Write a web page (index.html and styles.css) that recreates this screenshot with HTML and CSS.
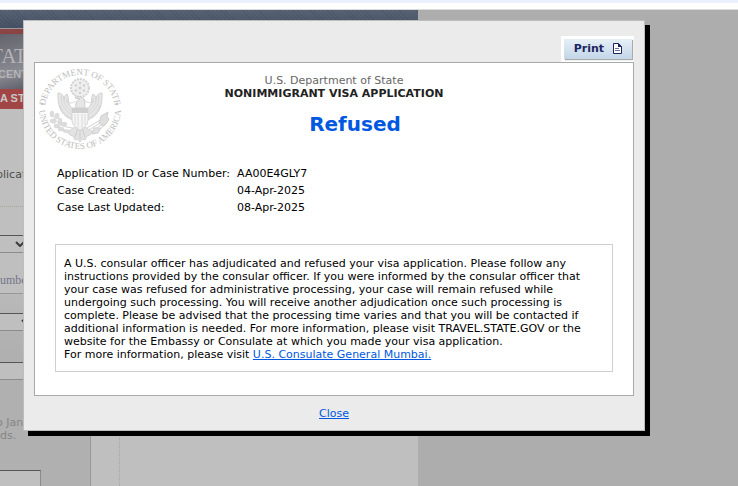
FILE: index.html
```
<!DOCTYPE html>
<html lang="en">
<head>
    <meta charset="UTF-8">
    <meta name="viewport" content="width=device-width, initial-scale=1.0">
    <title>Visa Status Check</title>
    <link rel="stylesheet" href="styles.css">
</head>
<body>
    <div class="top-strip"></div>

    <div class="page">
        <div class="stripe"></div>
        <div class="banner">
            <div class="banner-title">TAT</div>
            <div class="banner-sub">CENT</div>
        </div>
        <div class="nav">A ST</div>
        <div class="intro">plicat</div>
        <div class="columns">
            <form class="sidebar">
                <div class="select-row">
                    <select class="field type-select" aria-label="Visa type"><option></option></select>
                    <svg class="arrow" width="10" height="6" viewBox="0 0 10 6"><path d="M1 1l4 4 4-4" fill="none" stroke="#3c3c3c" stroke-width="2"/></svg>
                </div>
                <div class="field-label">umbe</div>
                <div class="panel">
                    <div class="select-row">
                        <select class="field place-select" aria-label="Location"><option></option></select>
                        <svg class="arrow arrow-far" width="10" height="6" viewBox="0 0 10 6"><path d="M1 1l4 4 4-4" fill="none" stroke="#3c3c3c" stroke-width="2"/></svg>
                    </div>
                    <input class="field case-input" type="text" aria-label="Case number">
                    <p class="hint">o Jan<br>ds.</p>
                    <input class="field code-input" type="text" aria-label="Code">
                </div>
            </form>
            <div class="content"></div>
        </div>
    </div>

    <div class="dialog" role="dialog" aria-labelledby="status">
        <div class="toolbar">
            <div class="print-box">
                <button class="print-btn" type="button">Print
                    <svg width="9" height="11" viewBox="0 0 9 11"><path d="M.5.5h5l3 3v7h-8z" fill="#fff" stroke="#1c2560"/><path d="M5 0v4h4z" fill="#1c2560"/><path d="M2 5.500h4M2 7.500h5" stroke="#6b7296"/></svg>
                </button>
            </div>
        </div>

        <div class="report">
            <div class="report-head">
                <svg class="seal" width="84" height="86" viewBox="-1 -1 84 86">
                    <defs>
                        <path id="arc-top" d="M6 42a35 35 0 0 1 70 0"/>
                        <path id="arc-bottom" d="M0 40a41 41 0 0 0 82 0"/>
                    </defs>
                    <g class="seal-text">
                        <text><textPath href="#arc-top" startOffset="50%">DEPARTMENT OF STATE</textPath></text>
                        <text><textPath href="#arc-bottom" startOffset="50%">UNITED STATES OF AMERICA</textPath></text>
                    </g>
                    <g fill="#c4c4c4"><circle cx="3" cy="36" r="1.200"/><circle cx="78" cy="36" r="1.200"/></g>
                    <!-- crest -->
                    <circle cx="41" cy="20" r="9" fill="#efefef" stroke="#d2d2d2" stroke-width="2" stroke-dasharray="2 1"/>
                    <g fill="#cfcfcf">
                        <circle cx="41" cy="20" r="1.500"/><circle cx="41" cy="15" r="1.200"/><circle cx="41" cy="25" r="1.200"/>
                        <circle cx="37" cy="17.500" r="1.200"/><circle cx="45" cy="17.500" r="1.200"/>
                        <circle cx="37" cy="22.500" r="1.200"/><circle cx="45" cy="22.500" r="1.200"/>
                    </g>
                    <!-- wings -->
                    <g id="wing">
                        <path d="M34 52C24 49 18 40 19 25c4 0 6 3 6 7 0-3 1-5 3-6 2 4 1 7 2 10 1 4 4 5 6 5z" fill="#e6e6e6" stroke="#d2d2d2"/>
                        <path d="M22 28c0 8 3 14 11 19M25 32c1 6 4 9 9 12M21 37c2 7 6 11 12 13M28 30c0 5 3 9 7 11" fill="none" stroke="#d4d4d4" stroke-width=".8"/>
                    </g>
                    <use href="#wing" transform="matrix(-1 0 0 1 82 0)"/>
                    <!-- head, shield, tail -->
                    <path d="M37 40c-1-4 0-8 4-9l-5-1c2-2 7-2 9 1 2 3 0 6 1 9z" fill="#e6e6e6" stroke="#cccccc"/>
                    <path d="M27 33c5 3 7 2 9 0M46 33c3 2 6 2 9 0" fill="none" stroke="#d6d6d6"/>
                    <path d="M36 59l-8 5 3 3 3 1 2 4 3-1 2 3 2-3 3 1 2-4 3-1 3-3-8-5z" fill="#e2e2e2" stroke="#d6d6d6"/>
                    <path d="M39 60l-3 9M41 60v11M43 60l3 9" stroke="#cecece"/>
                    <path d="M33 40h16v12c0 5-4 8-8 10-4-2-8-5-8-10z" fill="#f5f5f5" stroke="#d6d6d6"/>
                    <path d="M33 40h16v5H33z" fill="#cfcfcf"/>
                    <path d="M36 46v11M39 46v14M43 46v14M46 46v11" stroke="#dadada"/>
                    <!-- olive branch -->
                    <path d="M14 46c2 8 7 13 20 14M15 55c3 4 8 7 13 8" fill="none" stroke="#d4d4d4"/>
                    <g fill="#dcdcdc" stroke="#cecece" stroke-width=".4">
                        <ellipse cx="13" cy="46" rx="2" ry="3"/><ellipse cx="18" cy="48" rx="2" ry="3"/>
                        <ellipse cx="14" cy="53" rx="3" ry="2"/><ellipse cx="21" cy="53" rx="2" ry="3"/>
                        <ellipse cx="18" cy="58" rx="3" ry="2"/><ellipse cx="25" cy="56" rx="3" ry="2"/>
                        <ellipse cx="22" cy="61" rx="3" ry="2"/><ellipse cx="27" cy="63" rx="3" ry="1.500"/>
                    </g>
                    <!-- arrows -->
                    <path d="M48 60l20-12M50 62l19-12M52 64l16-11M55 66l12-10" stroke="#d2d2d2"/>
                    <path d="M62 48l7-4-1 5 2 2-3 5-3 2-4-3z" fill="#dfdfdf" stroke="#d0d0d0"/>
                    <path d="M55 60l-2 6 6-1 3-5z" fill="#e2e2e2" stroke="#d2d2d2"/>
                </svg>
                <div class="titles">
                    <div class="dept">U.S. Department of State</div>
                    <div class="app-type">NONIMMIGRANT VISA APPLICATION</div>
                    <h1 class="status" id="status">Refused</h1>
                </div>
            </div>

            <table class="case-info">
                <tr><th scope="row">Application ID or Case Number:</th><td>AA00E4GLY7</td></tr>
                <tr><th scope="row">Case Created:</th><td>04-Apr-2025</td></tr>
                <tr><th scope="row">Case Last Updated:</th><td>08-Apr-2025</td></tr>
            </table>

            <div class="message">
                A U.S. consular officer has adjudicated and refused your visa application. Please follow any instructions provided by the consular officer. If you were informed by the consular officer that your case was refused for administrative processing, your case will remain refused while undergoing such processing. You will receive another adjudication once such processing is complete. Please be advised that the processing time varies and that you will be contacted if additional information is needed. For more information, please visit TRAVEL.STATE.GOV or the website for the Embassy or Consulate at which you made your visa application.<br>
                For more information, please visit <a href="#">U.S. Consulate General Mumbai.</a>
            </div>
        </div>

        <div class="close-row"><a href="#">Close</a></div>
    </div>
</body>
</html>
```
FILE: styles.css
```
* {
    box-sizing: border-box;
}
body {
    margin: 0;
    min-height: 100vh;
    display: flex;
    flex-direction: column;
    position: relative;
    background: #adadad;
    font-family: Verdana, "DejaVu Sans", sans-serif;
    font-size: 11px;
    line-height: 13px;
    color: #000;
}
a {
    color: #0058e0;
}

/* page behind the dialog */
.top-strip {
    height: 10px;
    border-top: 3px solid #eaf1fd;
    border-bottom: 1px solid #dcdcdc;
    background: #fff;
}
.page {
    flex: 1;
    display: flex;
    flex-direction: column;
    width: 100%;
    max-width: 418px;
    overflow: hidden;
    background: #bfbfbf;
}
.stripe {
    height: 19px;
    border-bottom: 1px solid #9a9a9a;
    background: repeating-linear-gradient(45deg, rgba(0, 0, 0, 0.08) 0 1px, transparent 1px 3px), linear-gradient(#586476, #465265);
}
.banner {
    height: 60px;
    padding-top: 11px;
    border-top: 5px solid #8a4444;
    background: linear-gradient(165deg, #62636c 0, #8b8b93 25%, #3f4151 45%, #2b3044);
    color: #b4b4b8;
    text-indent: -10px;
}
.banner-title {
    font-family: "Liberation Serif", serif;
    font-size: 21px;
    line-height: 22px;
}
.banner-sub {
    font-family: "Liberation Sans", sans-serif;
    font-weight: bold;
    font-size: 11px;
    line-height: 14px;
    text-indent: -2px;
}
.nav {
    padding: 1px 0 2px;
    background: #a24545;
    color: #c8c8c8;
    font-family: "Liberation Sans", sans-serif;
    font-weight: bold;
    font-size: 11px;
    line-height: 17px;
}
.intro {
    height: 97px;
    padding-top: 59px;
    color: #4c4c4c;
    text-indent: -4px;
}
.columns {
    flex: 1;
    display: flex;
}
.sidebar {
    width: 91px;
    display: flex;
    flex-direction: column;
    padding-top: 28px;
    border-top: 1px dotted #a8a59c;
    border-right: 1px solid #989898;
}
.content {
    flex: 1;
    margin-left: 28px;
    border-left: 1px dotted #a6a6a6;
}
.field {
    display: block;
    height: 18px;
    margin: 0;
    padding: 0;
    border: 1px solid #8c8c8c;
    border-top-color: #555;
    border-left: 0;
    border-radius: 0;
    background: #bfbfbf;
    appearance: none;
}
.select-row {
    position: relative;
}
.arrow {
    position: absolute;
    left: 15px;
    top: 6px;
}
.arrow-far {
    left: 21px;
}
.type-select {
    width: 30px;
}
.place-select {
    width: 36px;
}
.field-label {
    height: 40px;
    padding-top: 21px;
    font-family: "Liberation Serif", serif;
    font-size: 12px;
    color: #74748c;
}
.panel {
    flex: 1;
    padding-top: 19px;
    border-top: 1px solid #989898;
    background: linear-gradient(#b9b9b9, #b0b0b0 30%);
}
.case-input {
    width: 72px;
    margin-top: 31px;
}
.hint {
    margin: 36px 0 28px;
    color: #858585;
    text-indent: -4px;
}

.code-input {
    width: 41px;
}

/* dialog */
.dialog {
    position: absolute;
    top: 20px;
    left: 23px;
    width: calc(100% - 46px);
    max-width: 622px;
    padding: 15px 10px 0;
    border: 1px solid #bdbdbd;
    background: #ebebeb;
    box-shadow: 5px 5px 0 #000;
}
.toolbar {
    display: flex;
    justify-content: flex-end;
}
.print-box {
    padding: 3px 2px 3px 3px;
    background: #fff;
}
.print-btn {
    display: flex;
    align-items: center;
    gap: 9px;
    height: 20px;
    padding: 0 10px 1px;
    border: 0;
    background: linear-gradient(#e6eff6, #c3d6e7);
    box-shadow: 1px 1px 1px #aaa;
    color: #1c2560;
    font: bold 11px/13px Verdana, "DejaVu Sans", sans-serif;
}
.report {
    padding: 5px 20px 23px;
    border: 1px solid #a9a9a9;
    background: #fff;
}
.report-head {
    position: relative;
    margin: 0 -20px;
}
.seal {
    position: absolute;
    left: 3px;
    top: -1px;
}
.seal-text {
    fill: #bcbcbc;
    font-family: "Liberation Serif", serif;
    font-size: 9px;
    text-anchor: middle;
}
.titles {
    padding-top: 6px;
    text-align: center;
}
.dept {
    color: #666;
}
.app-type {
    font-weight: bold;
    color: #222;
}
.status {
    margin: 11px 0 28px;
    padding-left: 42px;
    font-size: 20px;
    line-height: 26px;
    color: #0058e0;
}
.case-info {
    border-collapse: collapse;
}
.case-info th,
.case-info td {
    padding: 2px;
    font-weight: normal;
    text-align: left;
}
.case-info th {
    padding-right: 5px;
}
.message {
    margin-top: 28px;
    padding: 12px 8px 10px;
    border: 1px solid #cfcfcf;
}
.close-row {
    padding: 11px 0 10px;
    text-align: center;
}
```
